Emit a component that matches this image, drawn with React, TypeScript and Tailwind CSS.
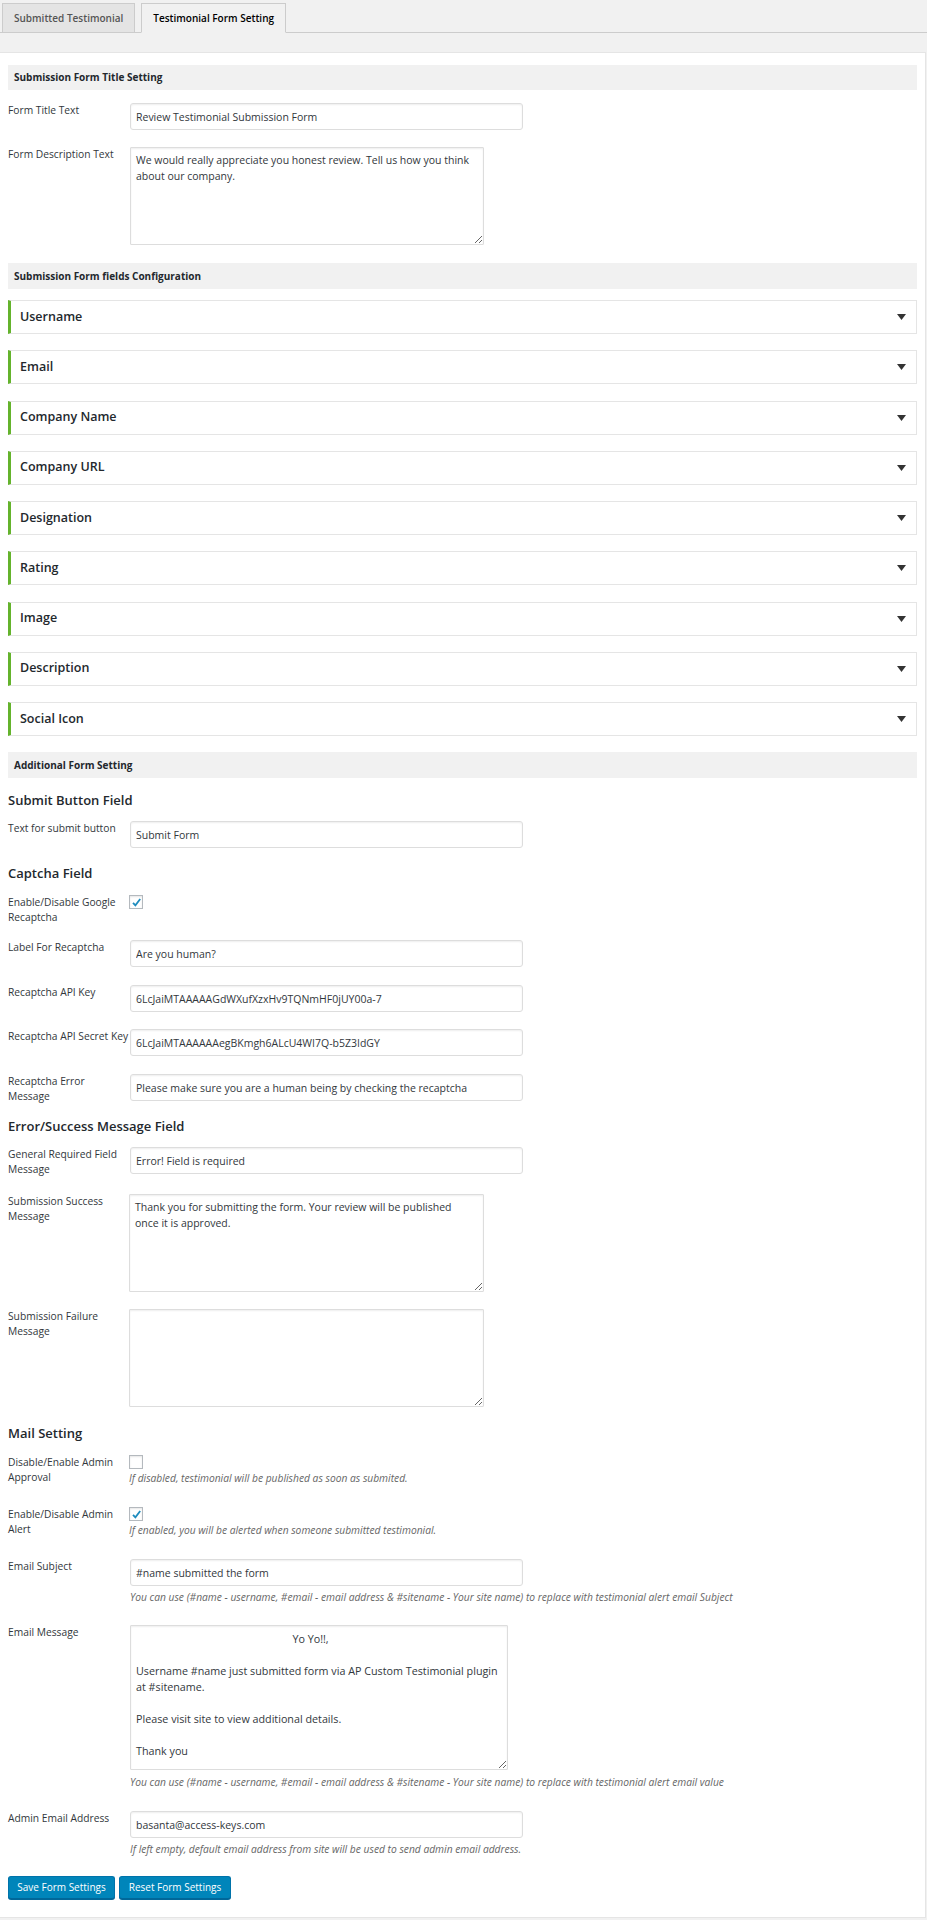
import React from 'react';

const fields = [
  'Username',
  'Email',
  'Company Name',
  'Company URL',
  'Designation',
  'Rating',
  'Image',
  'Description',
  'Social Icon',
];

const inputCls =
  'h-[27px] w-[393px] rounded-[3px] border border-[#ddd] bg-white px-[5px] text-[10.5px] text-[#32373c] shadow-[inset_0_1px_2px_rgba(0,0,0,0.07)] outline-none';
const areaCls =
  'block rounded-[1px] border border-[#ddd] bg-white py-[4px] pl-[5px] leading-[16px] text-[#32373c] shadow-[inset_0_1px_2px_rgba(0,0,0,0.07)] outline-none';

const emailMessage =
  '                                                        Yo Yo!!,\n\nUsername #name just submitted form via AP Custom Testimonial plugin\nat #sitename.\n\nPlease visit site to view additional details.\n\nThank you';

function SectionBar({ title, className }: { title: string; className: string }) {
  return (
    <div className={`flex items-center bg-[#f1f1f1] pl-[6px] text-[10px] font-bold text-[#23282d] ${className}`}>
      {title}
    </div>
  );
}

function Heading({ title, className }: { title: string; className: string }) {
  return <h3 className={`h-[20px] text-[13px] font-semibold leading-[20px] text-[#23282d] ${className}`}>{title}</h3>;
}

function Row({
  label,
  className,
  children,
}: {
  label: React.ReactNode;
  className: string;
  children: React.ReactNode;
}) {
  return (
    <div className={`flex items-start ${className}`}>
      <div className="w-[122px] shrink-0 whitespace-nowrap text-[10.25px] leading-[15px] text-[#32373c]">{label}</div>
      <div className="flex flex-col">{children}</div>
    </div>
  );
}

function Hint({ text, className }: { text: string; className: string }) {
  return <p className={`text-[10.25px] italic leading-[14px] text-[#666] ${className}`}>{text}</p>;
}

function Checkbox({ checked }: { checked?: boolean }) {
  return (
    <span className="-ml-px flex h-[14px] w-[14px] items-center justify-center border border-[#b4b9be] bg-white shadow-[inset_0_1px_2px_rgba(0,0,0,0.1)]">
      {checked && (
        <svg width="11" height="11" viewBox="0 0 11 11">
          <path d="M2 5.8 L4.4 8.4 L9.2 2" fill="none" stroke="#1e8cbe" strokeWidth="1.8" />
        </svg>
      )}
    </span>
  );
}

function Accordion({ title }: { title: string }) {
  return (
    <div className="flex h-[34px] items-center justify-between border border-l-[3px] border-[#e5e5e5] border-l-[#64b32c] bg-white pl-[9px] pr-[10px]">
      <span className="text-[12.5px] font-semibold text-[#23282d]">{title}</span>
      <svg width="9" height="6" viewBox="0 0 9 6">
        <polygon points="0,0 9,0 4.5,6" fill="#333" />
      </svg>
    </div>
  );
}

export default function App() {
  return (
    <div className="min-h-[1920px] w-full bg-[#f1f1f1] font-['Open_Sans','Noto_Sans',sans-serif]">
      {/* Tabs */}
      <div className="flex h-[33px] items-end gap-[6px] border-b border-[#ccc] pl-[2px]">
        <div className="-mb-px flex h-[30px] items-center border border-[#ccc] bg-[#e4e4e4] px-[11px] text-[10px] font-semibold text-[#555]">
          Submitted Testimonial
        </div>
        <div className="-mb-px flex h-[30px] items-center border border-[#ccc] border-b-[#f1f1f1] bg-[#f1f1f1] px-[11px] text-[10px] font-semibold text-black">
          Testimonial Form Setting
        </div>
      </div>

      {/* Panel */}
      <div className="mt-[19px] w-[926px] border-y border-r border-[#e5e5e5] bg-white px-[8px] pb-[18px]">
        <div className="flex flex-col">
          <SectionBar title="Submission Form Title Setting" className="mt-[12px] h-[25px]" />

          <Row label="Form Title Text" className="mt-[13px]">
            <input className={inputCls} defaultValue="Review Testimonial Submission Form" />
          </Row>

          <Row label="Form Description Text" className="mt-[17px]">
            <textarea
              className={`${areaCls} h-[98px] w-[354px] pr-[5px] text-[10.5px]`}
              defaultValue="We would really appreciate you honest review. Tell us how you think about our company."
            />
          </Row>

          <SectionBar title="Submission Form fields Configuration" className="mt-[18px] h-[26px]" />

          <div className="mt-[11px] flex flex-col gap-[16.25px]">
            {fields.map((f) => (
              <Accordion key={f} title={f} />
            ))}
          </div>

          <SectionBar title="Additional Form Setting" className="mt-[16px] h-[26px]" />

          <Heading title="Submit Button Field" className="mt-[12px]" />
          <Row label="Text for submit button" className="mt-[11px]">
            <input className={inputCls} defaultValue="Submit Form" />
          </Row>

          <Heading title="Captcha Field" className="mt-[15px]" />
          <Row
            label={
              <>
                Enable/Disable Google
                <br />
                Recaptcha
              </>
            }
            className="mt-[12px]"
          >
            <Checkbox checked />
          </Row>
          <Row label="Label For Recaptcha" className="mt-[15px]">
            <input className={inputCls} defaultValue="Are you human?" />
          </Row>
          <Row label="Recaptcha API Key" className="mt-[18px]">
            <input className={inputCls} defaultValue="6LcJaiMTAAAAAGdWXufXzxHv9TQNmHF0jUY00a-7" />
          </Row>
          <Row label="Recaptcha API Secret Key" className="mt-[17px]">
            <input className={inputCls} defaultValue="6LcJaiMTAAAAAAegBKmgh6ALcU4WI7Q-b5Z3IdGY" />
          </Row>
          <Row
            label={
              <>
                Recaptcha Error
                <br />
                Message
              </>
            }
            className="mt-[18px]"
          >
            <input className={inputCls} defaultValue="Please make sure you are a human being by checking the recaptcha" />
          </Row>

          <Heading title="Error/Success Message Field" className="mt-[12px]" />
          <Row
            label={
              <>
                General Required Field
                <br />
                Message
              </>
            }
            className="mt-[11px]"
          >
            <input className={inputCls} defaultValue="Error! Field is required" />
          </Row>
          <Row
            label={
              <>
                Submission Success
                <br />
                Message
              </>
            }
            className="mt-[17px]"
          >
            <textarea
              className={`${areaCls} -ml-px h-[98px] w-[355px] pr-[14px] text-[10.5px]`}
              defaultValue="Thank you for submitting the form. Your review will be published once it is approved."
            />
          </Row>
          <Row
            label={
              <>
                Submission Failure
                <br />
                Message
              </>
            }
            className="mt-[17px]"
          >
            <textarea className={`${areaCls} -ml-px h-[98px] w-[355px] pr-[5px] text-[10.5px]`} defaultValue="" />
          </Row>

          <Heading title="Mail Setting" className="mt-[16px]" />
          <Row
            label={
              <>
                Disable/Enable Admin
                <br />
                Approval
              </>
            }
            className="mt-[12px]"
          >
            <Checkbox />
            <Hint text="If disabled, testimonial will be published as soon as submited." className="-ml-px mt-[2px]" />
          </Row>
          <Row
            label={
              <>
                Enable/Disable Admin
                <br />
                Alert
              </>
            }
            className="mt-[22px]"
          >
            <Checkbox checked />
            <Hint text="If enabled, you will be alerted when someone submitted testimonial." className="-ml-px mt-[2px]" />
          </Row>
          <Row label="Email Subject" className="mt-[22px]">
            <input className={inputCls} defaultValue="#name submitted the form" />
            <Hint
              text="You can use (#name - username, #email - email address & #sitename - Your site name) to replace with testimonial alert email Subject"
              className="mt-[4px]"
            />
          </Row>
          <Row label="Email Message" className="mt-[21px]">
            <textarea
              className={`${areaCls} h-[145px] w-[378px] pr-[4px] pt-[5px] text-[10.75px]`}
              defaultValue={emailMessage}
            />
            <Hint
              text="You can use (#name - username, #email - email address & #sitename - Your site name) to replace with testimonial alert email value"
              className="mt-[5px]"
            />
          </Row>
          <Row label="Admin Email Address" className="mt-[22px]">
            <input className={inputCls} defaultValue="basanta@access-keys.com" />
            <Hint
              text="If left empty, default email address from site will be used to send admin email address."
              className="mt-[4px]"
            />
          </Row>

          <div className="mt-[20px] flex gap-[4px]">
            <button className="h-[23px] w-[107px] rounded-[3px] border border-[#0073aa] border-b-[#006799] bg-[#0085ba] text-[10px] text-white shadow-[0_1px_0_#006799]">
              Save Form Settings
            </button>
            <button className="h-[23px] w-[112px] rounded-[3px] border border-[#0073aa] border-b-[#006799] bg-[#0085ba] text-[10px] text-white shadow-[0_1px_0_#006799]">
              Reset Form Settings
            </button>
          </div>
        </div>
      </div>
    </div>
  );
}
